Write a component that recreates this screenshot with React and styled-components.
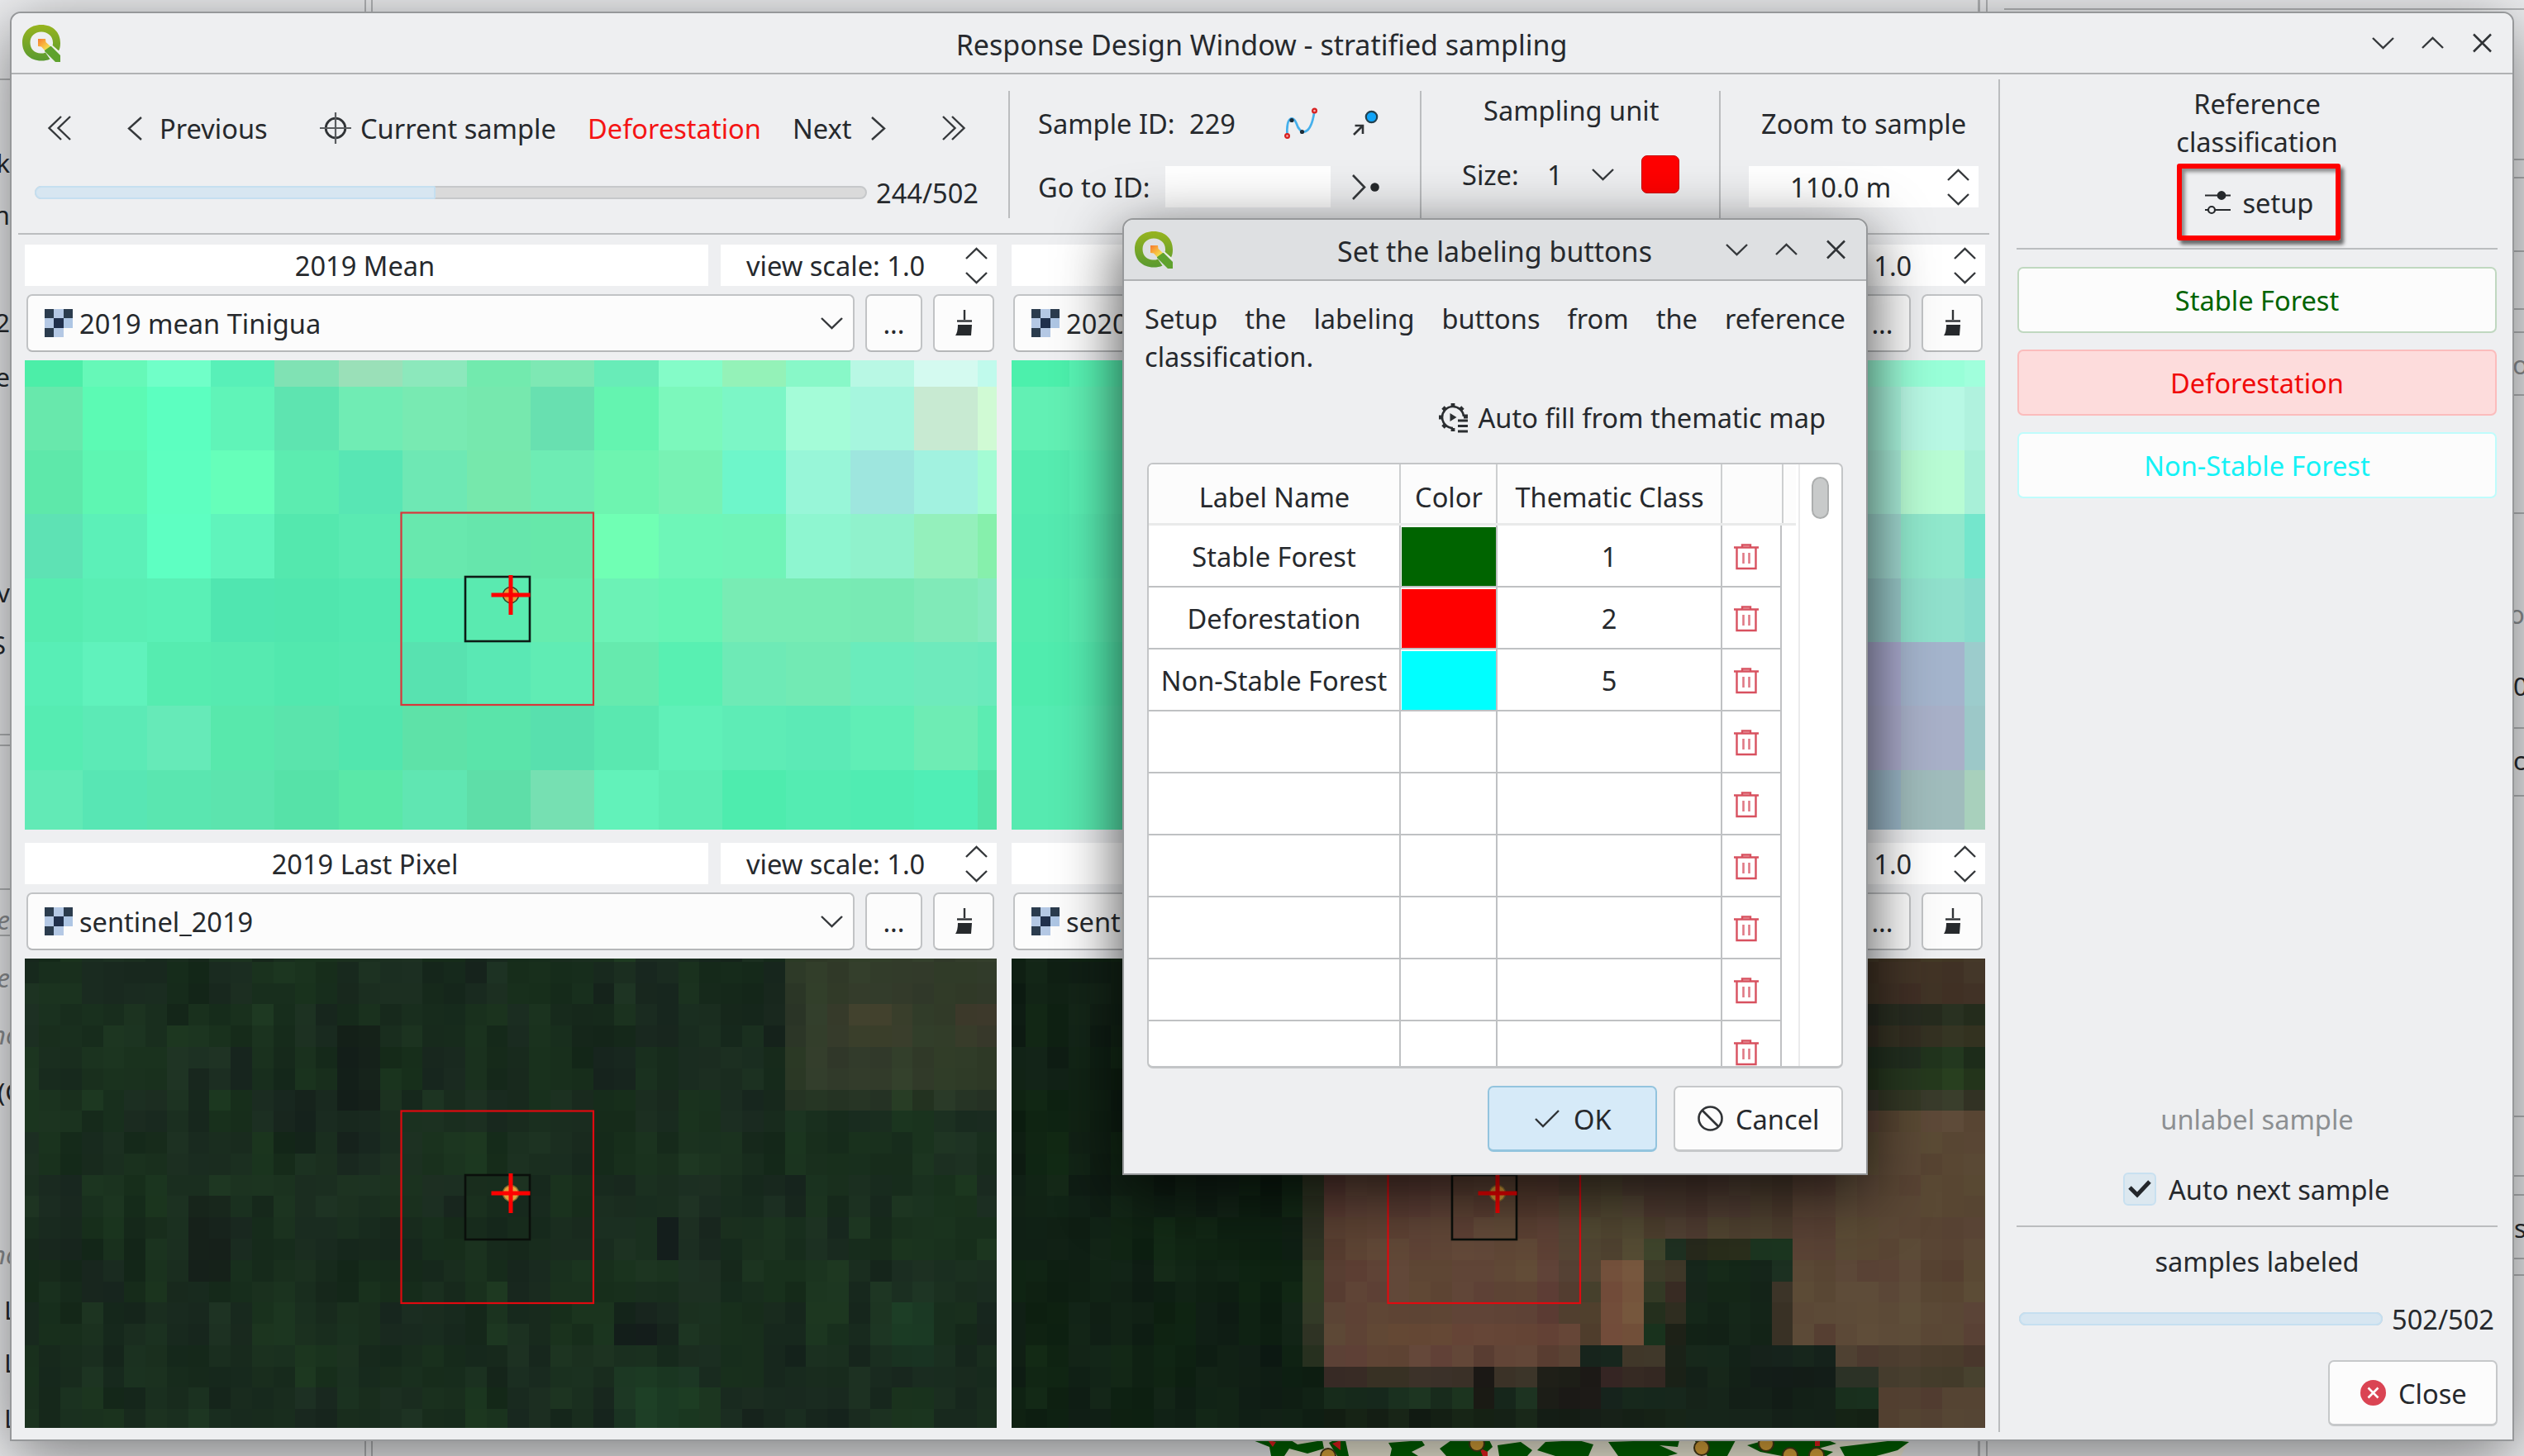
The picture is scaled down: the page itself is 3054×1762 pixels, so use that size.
import React from "react";
import styled, { createGlobalStyle, css } from "styled-components";

const GlobalStyle = createGlobalStyle`
  *, *::before, *::after { box-sizing: border-box; }
  html, body { margin: 0; padding: 0; }
  body {
    font-family: "Noto Sans", "Open Sans", sans-serif;
    font-size: 32.6px;
    line-height: 46px;
    color: #26292d;
    background: #eff0f1;
  }
`;

/* ---------- palette ---------- */
const ink = "#26292d";
const line = "#bbbdbf";
const face = "#eeeff1";

/* ---------- desktop and the window behind ---------- */
const Desktop = styled.div`
  position: relative;
  width: 3054px;
  height: 1762px;
  overflow: hidden;
  background: ${face};
`;

const BackRule = styled.div`
  position: absolute;
  left: ${(p) => p.$x}px;
  top: ${(p) => p.$y}px;
  width: ${(p) => p.$w}px;
  height: ${(p) => p.$h}px;
  background: ${(p) => p.$color || "#b4b6b8"};
`;

const BackText = styled.span`
  position: absolute;
  top: ${(p) => p.$y - 23}px;
  ${(p) => (p.$x === undefined ? "right: 3042px;" : `left: ${p.$x}px;`)}
  font-size: 31px;
  color: ${(p) => (p.$dim ? "#8d9093" : ink)};
  font-style: ${(p) => (p.$italic ? "italic" : "normal")};
  white-space: nowrap;
`;

const BackMap = styled.svg`
  position: absolute;
  left: 1510px;
  top: 1743px;
  display: block;
`;

/* ---------- window frames ---------- */
const Frame = styled.div`
  position: absolute;
  display: flex;
  flex-direction: column;
  background: ${face};
  border: 2px solid #96989a;
  border-radius: 13px 13px 0 0;
`;

const MainWindow = styled(Frame)`
  left: 12px;
  top: 14px;
  width: 3030px;
  height: 1730px;
  box-shadow: 0 18px 80px rgba(0, 0, 0, 0.5);
`;

const Dialog = styled(Frame)`
  left: 1358px;
  top: 264px;
  width: 902px;
  height: 1158px;
  box-shadow: 0 20px 76px rgba(0, 0, 0, 0.72);
`;

const TitleBar = styled.header`
  display: grid;
  grid-template-columns: 200px 1fr 200px;
  align-items: center;
  flex: none;
  height: 74px;
  padding: ${(p) => (p.$dialog ? "0 20px 0 12px" : "0 20px 0 12px")};
  background: ${(p) => (p.$dialog ? "#dee0e2" : face)};
  border-bottom: 2px solid #b0b2b4;
  border-radius: 12px 12px 0 0;
`;

const TitleText = styled.h1`
  margin: 0;
  padding: 3px 0 0 7px;
  font-size: 34px;
  font-weight: 400;
  text-align: center;
  white-space: nowrap;
`;

const TitleControls = styled.div`
  display: flex;
  justify-content: flex-end;
  gap: 33px;
  padding-right: 3px;
  margin-top: ${(p) => (p.$lift ? -1 : 0)}px;
`;

const ControlSlot = styled.div`
  display: flex;
  align-items: center;
  width: 27px;
  height: 26px;
`;

const Body = styled.div`
  display: flex;
  flex: 1;
  min-height: 0;
`;

/* ---------- generic text ---------- */
const Text = styled.span`
  display: block;
  flex: none;
  width: ${(p) => (p.$w ? `${p.$w}px` : "auto")};
  margin-left: ${(p) => p.$ml || 0}px;
  padding-top: 2px;
  color: ${(p) => p.$color || "inherit"};
  white-space: nowrap;
`;

const Icon = styled.svg`
  display: block;
  flex: none;
  overflow: visible;
  margin-left: ${(p) => p.$ml || 0}px;
`;

/* ---------- toolbar ---------- */
const LeftColumn = styled.div`
  display: flex;
  flex-direction: column;
  width: 2404px;
  padding: 0 11px 0 8px;
`;

const Toolbar = styled.div`
  display: flex;
  flex: none;
  height: 194px;
  border-bottom: 2px solid ${line};
`;

const ToolSection = styled.section`
  display: flex;
  flex-direction: column;
  flex: none;
  width: ${(p) => p.$w}px;
  padding-top: ${(p) => p.$pt}px;
  padding-left: ${(p) => p.$pl || 0}px;
  gap: ${(p) => p.$gap}px;
`;

const ToolRow = styled.div`
  display: flex;
  align-items: center;
  flex: none;
  height: ${(p) => p.$h || 46}px;
  padding-left: ${(p) => p.$pl || 0}px;
`;

const ToolSeparator = styled.div`
  flex: none;
  width: 2px;
  height: 154px;
  margin-top: 20px;
  background: ${line};
`;

const ProgressTrack = styled.div`
  flex: none;
  width: ${(p) => p.$w}px;
  height: 16px;
  border: 2px solid #c6c8ca;
  border-radius: 8px;
  background: #dadada;
`;

const ProgressFill = styled.div`
  height: 16px;
  margin: -2px 0 0 -2px;
  border: 2px solid #c5dff0;
  border-radius: ${(p) => (p.$full ? "8px" : "8px 2px 2px 8px")};
  background: #d7e6f1;
`;

const IdInput = styled.div`
  flex: none;
  width: 200px;
  height: 50px;
  background: #fff;
`;

const ColorSwatch = styled.div`
  flex: none;
  width: 46px;
  height: 46px;
  margin-left: 33px;
  border: 1px solid #c80000;
  border-radius: 7px;
  background: #ff0000;
`;

const SpinBox = styled.div`
  display: flex;
  align-items: center;
  justify-content: space-between;
  flex: ${(p) => (p.$w ? "none" : 1)};
  width: ${(p) => (p.$w ? `${p.$w}px` : "auto")};
  height: 50px;
  padding: 0 11px 0 ${(p) => p.$pl}px;
  background: #fff;
`;

const SpinArrows = styled.div`
  display: flex;
  flex-direction: column;
  gap: 15px;
`;

/* ---------- view panels ---------- */
const Views = styled.div`
  display: grid;
  grid-template-columns: 1176px 1178px;
  gap: 16px 18px;
  padding: 12px 5px 0 8px;
`;

const View = styled.section`
  display: flex;
  flex-direction: column;
  gap: 10px;
  height: 708px;
`;

const ViewHeader = styled.div`
  display: flex;
  gap: 15px;
  height: 50px;
`;

const ViewTitle = styled.div`
  width: 827px;
  padding-right: 4px;
  background: #fff;
  line-height: 52px;
  text-align: center;
`;

const LayerRow = styled.div`
  display: flex;
  height: 70px;
  padding: 0 3px 0 2px;
  gap: 13px;
`;

const raised = css`
  border: 2px solid #c1c3c5;
  border-bottom-color: #b5b7b9;
  border-radius: 7px;
  background: #fcfcfc;
`;

const LayerSelect = styled.div`
  ${raised}
  display: flex;
  align-items: center;
  flex: 1;
  padding: 0 12px 0 20px;
`;

const LayerName = styled.span`
  flex: 1;
  padding: 2px 0 0 8px;
  white-space: nowrap;
`;

const ToolButton = styled.div`
  ${raised}
  display: flex;
  align-items: center;
  justify-content: center;
  width: ${(p) => p.$w}px;
`;

const Canvas = styled.svg`
  display: block;
  flex: none;
  overflow: hidden;
`;

/* ---------- classification panel ---------- */
const SidePanel = styled.aside`
  display: flex;
  flex-direction: column;
  flex: 1;
  padding: 13px 18px 16px 22px;
  position: relative;
  &::before {
    content: "";
    position: absolute;
    left: 0;
    top: 6px;
    bottom: 9px;
    width: 2px;
    background: ${line};
  }
`;

const SideHeading = styled.div`
  text-align: center;
`;

const SetupButton = styled.div`
  display: flex;
  align-items: center;
  align-self: center;
  width: 198px;
  height: 93px;
  margin: 3px 0 0 3px;
  padding-left: 28px;
  border: 6px solid #fe0000;
  border-radius: 3px;
  box-shadow: 4px 5px 4px rgba(60, 60, 60, 0.75), inset 4px 4px 4px rgba(60, 60, 60, 0.55);
`;

const Rule = styled.div`
  flex: none;
  height: 2px;
  margin-top: ${(p) => p.$mt}px;
  background: ${line};
`;

const ClassList = styled.div`
  display: flex;
  flex-direction: column;
  gap: 20px;
  margin: 21px 1px 0 1px;
`;

const classTone = {
  forest: css`
    color: #006400;
    border-color: #c0d8c0;
    background: #fcfcfc;
  `,
  cleared: css`
    color: #f00a0a;
    border-color: #fbbcbc;
    background: #fddcdc;
  `,
  unstable: css`
    color: #14f2f6;
    border-color: #bffcfc;
    background: #fcfcfc;
  `,
};

const ClassButton = styled.div`
  display: flex;
  align-items: center;
  justify-content: center;
  height: 80px;
  padding-top: 2px;
  border: 2px solid;
  border-radius: 7px;
  ${(p) => classTone[p.$tone]}
`;

const Spacer = styled.div`
  flex: 1;
`;

const CenterLine = styled.div`
  text-align: center;
  margin-top: ${(p) => p.$mt || 0}px;
  color: ${(p) => (p.$dim ? "#8c8f92" : ink)};
`;

const CheckRow = styled.div`
  display: flex;
  align-items: center;
  height: 40px;
  margin-top: 41px;
  padding-left: 129px;
`;

const CheckBox = styled.div`
  display: flex;
  align-items: center;
  justify-content: center;
  width: 40px;
  height: 40px;
  border: 2px solid #c8e0f0;
  border-radius: 6px;
  background: #dce8f0;
`;

const ProgressRow = styled.div`
  display: flex;
  align-items: center;
  height: 46px;
  margin-top: 23px;
  padding-left: 3px;
`;

const PushButton = styled.div`
  display: flex;
  align-items: center;
  flex: none;
  width: 205px;
  height: 80px;
  padding-left: ${(p) => p.$pl}px;
  border: 2px solid ${(p) => (p.$primary ? "#93c4de" : "#c6c8ca")};
  border-bottom-width: 3px;
  border-radius: 7px;
  background: ${(p) => (p.$primary ? "#d6eaf8" : "#fcfcfc")};
`;

const CloseRow = styled.div`
  display: flex;
  justify-content: flex-end;
  margin-top: 27px;
`;

/* ---------- dialog content ---------- */
const DialogBody = styled.div`
  display: flex;
  flex-direction: column;
  padding: 23px 25px 0 25px;
`;

const Intro = styled.p`
  margin: 0;
  text-align: justify;
`;

const AutoFill = styled.div`
  display: flex;
  align-items: center;
  justify-content: flex-end;
  height: 46px;
  margin-top: 27px;
  padding-right: 24px;
  gap: 13px;
`;

const TableFrame = styled.div`
  display: flex;
  width: 842px;
  height: 733px;
  margin: 32px 0 0 3px;
  border: 2px solid #c3c5c7;
  border-bottom-width: 3px;
  border-radius: 7px;
  background: #fff;
  overflow: hidden;
`;

const TableArea = styled.div`
  width: 788px;
  border-right: 2px solid #ebebec;
`;

const columns = "305px 117px 272px";

const HeaderRow = styled.div`
  display: grid;
  grid-template-columns: ${columns} 74px;
  width: 783px;
  height: 74px;
  border-bottom: 3px solid #e9eaea;
  background: #fcfcfc;
`;

const HeaderCell = styled.div`
  display: flex;
  align-items: center;
  justify-content: center;
  padding: 8px 0 0 1px;
  border-right: 2px solid #cdcfd0;
  white-space: nowrap;
`;

const Row = styled.div`
  display: grid;
  grid-template-columns: ${columns} 72px;
  width: 766px;
  height: 75px;
`;

const Cell = styled.div`
  display: flex;
  align-items: center;
  justify-content: ${(p) => (p.$icon ? "flex-start" : "center")};
  padding-top: 3px;
  padding-left: ${(p) => (p.$icon ? 14 : 0)}px;
  border-right: 2px solid #bfc1c3;
  border-bottom: 2px solid #bfc1c3;
  white-space: nowrap;
`;

const ColorCell = styled(Cell)`
  ${(p) =>
    p.$color &&
    css`
      padding: 2px 0 0 1px;
      &::before {
        content: "";
        align-self: stretch;
        flex: 1;
        background: ${p.$color};
      }
    `}
`;

const ScrollArea = styled.div`
  flex: 1;
  padding: 15px 0 0 14px;
`;

const ScrollHandle = styled.div`
  width: 21px;
  height: 51px;
  border: 2px solid #acaeae;
  border-radius: 11px;
  background: #c8caca;
`;

const DialogButtons = styled.div`
  display: flex;
  justify-content: flex-end;
  gap: 20px;
  margin-top: 21px;
  padding-right: 3px;
`;

/* ---------- icons ---------- */
const Chevron = ({ dir = "down", w = 27, h = 14, ml, sw = 2.4, color = "#35383b" }) => {
  const d = {
    down: `M1 1 L${w / 2} ${h - 1} L${w - 1} 1`,
    up: `M1 ${h - 1} L${w / 2} 1 L${w - 1} ${h - 1}`,
    left: `M${w - 1} 1 L1 ${h / 2} L${w - 1} ${h - 1}`,
    right: `M1 1 L${w - 1} ${h / 2} L1 ${h - 1}`,
  }[dir];
  return (
    <Icon $ml={ml} width={w} height={h} viewBox={`0 0 ${w} ${h}`} fill="none" stroke={color} strokeWidth={sw}>
      <path d={d} />
    </Icon>
  );
};

const DoubleChevron = ({ flip, ml }) => (
  <Icon $ml={ml} width="28" height="30" viewBox="0 0 28 30" fill="none" stroke="#35383b" strokeWidth="2.4">
    <g transform={flip ? "translate(28 0) scale(-1 1)" : undefined}>
      <path d="M16 1 L1.5 15 L16 29" />
      <path d="M27 1 L12.5 15 L27 29" />
    </g>
  </Icon>
);

const CrossIcon = () => (
  <Icon width="27" height="24" viewBox="0 0 27 24" stroke="#303336" strokeWidth="2.5">
    <path d="M3 1.5 L24 22.5 M24 1.5 L3 22.5" />
  </Icon>
);

const QgisLogo = ({ id }) => (
  <Icon width="48" height="46" viewBox="0 0 48 46">
    <defs>
      <linearGradient id={id} x1="0" y1="0" x2="0" y2="1">
        <stop offset="0" stopColor="#97b41f" />
        <stop offset="1" stopColor="#5a9a30" />
      </linearGradient>
      <linearGradient id={`${id}t`} x1="0" y1="0" x2="1" y2="1">
        <stop offset="0" stopColor="#f47a30" />
        <stop offset="0.45" stopColor="#f9b23c" />
        <stop offset="0.8" stopColor="#f0e050" />
        <stop offset="1" stopColor="#c8dc70" />
      </linearGradient>
    </defs>
    <path
      fill={`url(#${id})`}
      fillRule="evenodd"
      d="M24 1 C38 1 47 10 47 23 C47 27 46.500 30 45 32.500 L37.500 26 C38 25 38 24 38 22.500 C38 15 32 9.500 24 9.500 C16 9.500 10.500 15 10.500 22.500 C10.500 30.500 16 35.500 23 35.500 C25.500 35.500 27.500 35.500 29 34.500 L34.500 42.500 C31.500 44 28 44.500 24 44.500 C10 44.500 1 35 1 22.500 C1 10 10 1 24 1 Z"
    />
    <path fill="#5fa22e" d="M28 27 L36 27 L47 38 L47 46 L41 46 L28 33 Z" />
    <path fill={`url(#${id}t)`} d="M20 18 L29 18 L29.500 22 L35 27 L28 32 L24 27.500 L20 27 Z" />
    <path stroke="#eef2e4" strokeWidth="1.600" d="M36.500 26 L47 35.500" fill="none" />
  </Icon>
);

const TargetIcon = () => (
  <Icon $ml={60} width="38" height="38" viewBox="0 0 38 38" fill="none" stroke="#303336">
    <circle cx="19" cy="19" r="11.800" strokeWidth="2.800" />
    <path d="M19 0 V38 M0 19 H38" strokeWidth="2.200" stroke="#5a5d60" />
  </Icon>
);

const CurveIcon = () => (
  <Icon $ml={59} width="40" height="38" viewBox="0 0 40 38" fill="none">
    <path d="M3.500 34 C2 10 11 10 14.500 19 C19 34 32 36 36.500 4" stroke="#45b0ec" strokeWidth="2.700" />
    <circle cx="3.500" cy="34.500" r="2.400" fill="#f2b8b8" stroke="#d82020" strokeWidth="2.200" />
    <circle cx="36.500" cy="4" r="2.400" fill="#f2b8b8" stroke="#d82020" strokeWidth="2.200" />
    <circle cx="9" cy="15.500" r="2.600" fill="#1d2c38" />
    <circle cx="21.500" cy="29.500" r="2.600" fill="#1d2c38" />
  </Icon>
);

const MovePointIcon = () => (
  <Icon $ml={43} width="32" height="32" viewBox="0 0 32 32" fill="none">
    <circle cx="22.500" cy="8.500" r="6.700" fill="#0fa4f8" stroke="#22404e" strokeWidth="2.200" />
    <path d="M1 30 L11.500 19.500 M2.500 19 H12 V29" stroke="#303336" strokeWidth="2.600" />
  </Icon>
);

const GoToIcon = () => (
  <Icon $ml={26} width="33" height="31" viewBox="0 0 33 31" fill="none">
    <path d="M1 1 L15 15.500 L1 30" stroke="#35383b" strokeWidth="2.600" />
    <circle cx="27.500" cy="15.500" r="5.300" fill="#26292c" />
  </Icon>
);

const RasterIcon = () => {
  const cells = [
    ["#2b3c4e", "#b4c8e4", "#2b3c4e"],
    ["#b4c8e4", "#20304c", "#aec6e4"],
    ["#2b3c4e", "#b4c8e4", null],
  ];
  return (
    <Icon width="34" height="34" viewBox="0 0 33 33" shapeRendering="crispEdges">
      {cells.map((r, y) => r.map((c, x) => c && <rect key={`${x}${y}`} x={x * 11} y={y * 11} width="11" height="11" fill={c} />))}
    </Icon>
  );
};

const BrushIcon = () => (
  <Icon width="22" height="34" viewBox="0 0 22 34">
    <path d="M12 1 V13" stroke="#303336" strokeWidth="2.400" />
    <path d="M3 14.500 H21" stroke="#303336" strokeWidth="2.400" />
    <path d="M4 19 H21 L20 32 H1 Q4 28 4 19 Z" fill="#26292c" />
  </Icon>
);

const SetupIcon = () => (
  <Icon width="31" height="30" viewBox="0 0 31 30" fill="none" stroke="#26292c" strokeWidth="2.200">
    <path d="M0 6.500 H31 M12 24 H31 M0 24 H4" />
    <circle cx="20" cy="6.500" r="4.300" fill="#26292c" />
    <circle cx="8" cy="24" r="4" />
  </Icon>
);

const GearIcon = () => (
  <Icon width="36" height="36" viewBox="0 0 36 36" fill="none" stroke="#2b2e31">
    <path d="M31 17 A13 13 0 1 0 18 31" strokeWidth="2.600" />
    <path d="M18 1 V5 M6 6 L9 9 M1 18 H5 M6 30 L9 27 M30 6 L27 9 M18 31 V35 M31 17 H36" strokeWidth="4.800" />
    <path d="M14.500 13 L22.500 18 L14.500 23 Z" fill="#2b2e31" stroke="none" />
    <path d="M22 20 H36 V36 H22 Z" fill={face} stroke="none" />
    <path d="M24 22 H36 M24 28.500 H36 M24 35 H36" strokeWidth="2.800" />
  </Icon>
);

const TrashIcon = () => (
  <Icon width="30" height="32" viewBox="0 0 30 32" fill="none" stroke="#d8515f" strokeWidth="2.400">
    <path d="M0 4.500 H30 M10 4 V1.500 H20 V4" />
    <path d="M3.500 5 V30 H26.500 V5" />
    <path d="M11.500 11 V24 M18.500 11 V24" strokeWidth="2.600" stroke="#e07a86" />
  </Icon>
);

const OkIcon = () => (
  <Icon width="30" height="22" viewBox="0 0 30 22" fill="none" stroke="#303336" strokeWidth="2.400">
    <path d="M1 11 L10 20 L29 1" />
  </Icon>
);

const CancelIcon = () => (
  <Icon width="31" height="31" viewBox="0 0 31 31" fill="none" stroke="#303336" strokeWidth="2.600">
    <circle cx="15.500" cy="15.500" r="14" />
    <path d="M5.500 5.500 L25.500 25.500" />
  </Icon>
);

const CloseIcon = () => (
  <Icon width="31" height="31" viewBox="0 0 31 31">
    <circle cx="15.500" cy="15.500" r="15.500" fill="#da4453" />
    <path d="M9.500 9.500 L21.500 21.500 M21.500 9.500 L9.500 21.500" stroke="#fff" strokeWidth="2.600" />
  </Icon>
);

const CheckIcon = () => (
  <Icon width="28" height="22" viewBox="0 0 28 22" fill="none" stroke="#24272b" strokeWidth="5">
    <path d="M2 9 L11 18 L26 2" />
  </Icon>
);

/* ---------- raster maps ---------- */
const CELL = 77.35;

const meanWest = `
4ceea8 66f8b8 70ffc8 58f0b8 80e2b4 9ae0b8 8ce8bc 72eaae 7ee8b4 68ecb8 84fcc8 94f2b8 88f8c8 b8f8e4 d4faf0 c0faec
68e8ac 5cfab4 5cffc0 60f4b8 5ee4b0 70ecb4 78eab2 76e8ae 68e0b0 64f4b0 7cf8bc 7cf6c6 a4fcd8 a6f6de c8ead2 d0fad4
5ee8aa 5ef6b2 5effc0 66ffba 5cecb0 58e6b4 6ee8b4 76e8ac 6eecb4 6ef4b0 78f2b4 6ef6ca 98f6d8 9ee6de a2f2e0 a4fcd4
5ee2b4 5cf0b8 5effc2 60f4bc 54e8ae 5aeab2 68e8ae 66e6ac 66e8aa 70ffb4 6ef6b8 70f4b8 8ef6d0 90f2cc 94f0bc 86f0ac
56ecb0 5aeeb4 5af0b6 50e6b0 50e6ae 52e8b0 54ecb2 5aeab0 66ecae 6cf2b6 66f4b4 78ecb4 78ecb4 78eab4 80eab8 86eac0
58eeb6 60f2bc 56ecb0 56eab0 52e8ae 54e8b0 58e2b0 5ae8b4 60ecb4 66eaae 58f0b2 6eeab6 72eab4 6aecbc 6eeabc 6aeabc
56ecb2 5ceab6 66eab8 58e8ac 5ae4ac 52e6ae 5ee2a8 5ae4aa 58e0ae 5ae8b0 60f0b8 5eecb6 5ceab6 60eeb6 6eecb4 5cecb2
62eab6 58e6b4 5ae6b0 5ce4ae 56e2a8 5ae8a8 60e6b2 5edea8 76e0b2 62f2ba 5eecb4 4eecae 54ecb2 50ecb2 50eeb6 54e4a8
`;

const eastEdge = [
  ["4cf0ac", "58f4b4", "9cfcd8", "98ffd8", "a0ffdc"],
  ["62f0b4", "60f0b4", "a8f4dc", "b8f8e4", "b0f2de"],
  ["56ecb0", "5af0b4", "a8ecd8", "b8fcd4", "a8f0d8"],
  ["54eab0", "58ecb2", "a0d8d0", "90e8cc", "74e6cc"],
  ["54ecae", "5aeeb2", "98c8c8", "90e0cc", "88dccc"],
  ["50ecae", "54ecb0", "a8a8cc", "a4b4cc", "9ccccc"],
  ["54ecb2", "58ecb2", "a8a8c8", "a8b0c8", "9cc8c8"],
  ["56eab0", "58eab0", "98b4c4", "a0bcbc", "a8d0bc"],
];

const parseGrid = (s) =>
  s
    .trim()
    .split("\n")
    .map((r) => r.trim().split(" "));

const meanEast = eastEdge.map(([a, b, c, d, e]) => [a, ...Array(12).fill(b), c, d, e]);

const MeanCells = ({ grid }) =>
  grid.map((row, r) =>
    row.map((c, k) => {
      const x = k === 0 ? 0 : 70.4 + (k - 1) * CELL;
      const y = r === 0 ? 0 : 31.6 + (r - 1) * CELL;
      return <rect key={`${r}-${k}`} x={x} y={y} width={CELL + 1} height={CELL + 1} fill={`#${c}`} />;
    })
  );

const hash = (x, y) => {
  const n = Math.sin(x * 127.1 + y * 311.7) * 43758.5453;
  return n - Math.floor(n);
};

const FINE = CELL / 3;

const forestBase = { c: [25, 45, 30], n: 11 };

/* [x0, y0, x1, y1, colour, noise, feather] in canvas pixels */
const westPatches = [
  [905, -60, 1240, 190, [49, 60, 41], 7, 34],
  [975, 40, 1075, 110, [70, 66, 47], 5, 34],
  [1110, 40, 1200, 110, [62, 58, 43], 5, 30],
  [700, 480, 830, 620, [29, 62, 37], 6, 40],
  [1030, 400, 1115, 500, [27, 62, 36], 6, 34],
  [705, 420, 775, 480, [20, 30, 27], 4, 16],
  [765, 310, 800, 376, [20, 29, 28], 3, 12],
  [190, 290, 250, 400, [22, 34, 26], 4, 12],
  [600, 40, 650, 200, [26, 52, 30], 5, 16],
  [380, 80, 430, 180, [20, 32, 25], 4, 12],
];

const eastPatches = [
  [-60, -60, 376, 620, [16, 34, 20], 9, 1],
  [352, 200, 378, 490, [48, 54, 36], 6, 12],
  [376, 180, 1000, 345, [78, 60, 48], 9, 18],
  [376, 240, 690, 500, [94, 66, 53], 11, 16],
  [660, 260, 790, 410, [82, 68, 51], 9, 20],
  [650, 390, 745, 480, [82, 66, 47], 11, 20],
  [440, 430, 700, 486, [100, 68, 53], 10, 16],
  [376, 484, 790, 532, [56, 46, 37], 10, 12],
  [376, 532, 1060, 620, [22, 34, 22], 9, 12],
  [710, 360, 772, 480, [116, 80, 60], 9, 14],
  [728, 460, 790, 486, [104, 72, 56], 7, 10],
  [560, 480, 592, 545, [28, 27, 22], 8, 8],
  [640, 480, 712, 545, [28, 28, 22], 8, 10],
  [772, 350, 830, 440, [58, 50, 36], 8, 14],
  [790, 440, 830, 520, [30, 34, 24], 6, 10],
  [817, 335, 905, 390, [40, 40, 27], 7, 14],
  [817, 355, 920, 480, [20, 36, 24], 6, 10],
  [800, 476, 1000, 620, [20, 33, 24], 7, 10],
  [920, 380, 980, 480, [58, 50, 38], 7, 12],
  [940, 165, 1240, 475, [90, 70, 53], 10, 14],
  [998, 470, 1240, 510, [76, 62, 46], 9, 10],
  [1046, 500, 1240, 620, [82, 66, 48], 9, 10],
  [1000, -60, 1240, 70, [66, 54, 38], 7, 10],
  [1000, 64, 1240, 122, [52, 50, 34], 7, 10],
  [1000, 116, 1240, 168, [38, 56, 30], 7, 10],
];

const clamp01 = (v) => Math.max(0, Math.min(1, v));

const FineCells = ({ patches, seed }) => {
  const out = [];
  for (let r = -1; r < 23; r++) {
    for (let k = -1; k < 46; k++) {
      const x = 17.2 + k * FINE;
      const y = 3.8 + r * FINE;
      const cx = x + FINE / 2;
      const cy = y + FINE / 2;
      let c = forestBase.c;
      let n = forestBase.n;
      patches.forEach(([x0, y0, x1, y1, pc, pn, feather]) => {
        const inside = Math.min(cx - x0, x1 - cx, cy - y0, y1 - cy);
        const a = clamp01(inside / feather);
        if (a > 0) {
          c = c.map((q, i) => q + (pc[i] - q) * a);
          n += (pn - n) * a;
        }
      });
      const wide = hash(Math.floor(k / 3) + seed * 7, Math.floor(r / 3)) - 0.5;
      const broad = hash(k + seed, Math.floor((r + (k % 3)) / 3)) - 0.5;
      const fine = hash(k + seed * 3, r) - 0.5;
      const tint = hash(Math.floor(k / 2) * 3 + seed, Math.floor(r / 2) + 51) - 0.5;
      const v = (broad + fine * 0.5 + wide * 0.5) * n;
      const rgb = [c[0] + v * 0.6 - tint * n * 0.2, c[1] + v * 1.1 + tint * n * 0.5, c[2] + v * 0.5 - tint * n * 0.4].map((q) =>
        Math.max(0, Math.round(q))
      );
      out.push(<rect key={`${r},${k}`} x={x} y={y} width={FINE + 0.6} height={FINE + 0.6} fill={`rgb(${rgb.join(",")})`} />);
    }
  }
  return out;
};

const SampleMarker = ({ dark }) => (
  <g fill="none">
    <rect x="455.500" y="184.500" width="232.500" height="232.500" stroke={dark ? "#e00a10" : "#d8363a"} strokeWidth="2.200" />
    <rect x="533" y="262" width="78" height="78" stroke={dark ? "#0a0f0b" : "#0c1c16"} strokeWidth="2.600" />
    <circle cx="588" cy="284" r="9.500" fill="#e2a03a" stroke={dark ? "#8a7030" : "#33402a"} strokeWidth="1.500" />
    <path d="M588 260 V308 M564.500 284 H611.500" stroke="#ff0000" strokeWidth="5" />
  </g>
);

const MapCanvas = ({ width, children, dark }) => (
  <Canvas width={width} height="568" viewBox={`0 0 ${width} 568`}>
    <g shapeRendering="crispEdges">{children}</g>
    <SampleMarker dark={dark} />
  </Canvas>
);

/* ---------- composed parts ---------- */
const Spinner = () => (
  <SpinArrows>
    <Chevron dir="up" />
    <Chevron dir="down" />
  </SpinArrows>
);

const WindowControls = ({ lift }) => (
  <TitleControls $lift={lift}>
    <ControlSlot>
      <Chevron />
    </ControlSlot>
    <ControlSlot>
      <Chevron dir="up" />
    </ControlSlot>
    <ControlSlot>
      <CrossIcon />
    </ControlSlot>
  </TitleControls>
);

const ViewPanel = ({ title, layer, children }) => (
  <View>
    <ViewHeader>
      <ViewTitle>{title}</ViewTitle>
      <SpinBox $pl={31}>
        <Text>view scale: 1.0</Text>
        <Spinner />
      </SpinBox>
    </ViewHeader>
    <LayerRow>
      <LayerSelect>
        <RasterIcon />
        <LayerName>{layer}</LayerName>
        <Chevron />
      </LayerSelect>
      <ToolButton $w={69}>
        <Text>...</Text>
      </ToolButton>
      <ToolButton $w={74}>
        <BrushIcon />
      </ToolButton>
    </LayerRow>
    {children}
  </View>
);

const backTexts = [
  { y: 197, t: "k" },
  { y: 260, t: "n" },
  { y: 390, t: "2" },
  { y: 456, t: "e" },
  { y: 717, t: "v" },
  { y: 780, t: "S", x: -10 },
  { y: 1113, t: "e", dim: true, italic: true },
  { y: 1183, t: "e", dim: true, italic: true },
  { y: 1252, t: "no", x: -11, dim: true, italic: true },
  { y: 1321, t: "(C", x: -3 },
  { y: 1518, t: "no", x: -11, dim: true, italic: true },
  { y: 1585, t: "L", x: 5 },
  { y: 1649, t: "L", x: 5 },
  { y: 1716, t: "L", x: 5 },
  { y: 441, t: "o", x: 3040, dim: true },
  { y: 743, t: "ov", x: 3036, dim: true },
  { y: 830, t: "0", x: 3041 },
  { y: 920, t: "c", x: 3041 },
  { y: 1486, t: "s", x: 3042 },
];

const backLinesRight = [192, 214, 303, 373, 401, 477, 620, 880, 962, 1350, 1422, 1445, 1522, 1542];
const backLinesLeft = [95, 888, 901, 1075, 1131];

const mapBlobs = [
  "M6 0 L52 0 L60 5 L90 0 L92 10 L72 16 L50 10 L44 19 L28 19 L26 8 Z",
  "M98 3 L104 0 L118 0 L122 19 L108 19 Z",
  "M170 3 L210 0 L214 6 L198 14 L206 19 L172 19 L174 10 Z",
  "M246 0 L292 0 L296 8 L284 19 L240 19 L232 10 Z",
  "M302 6 L330 2 L344 12 L338 19 L304 19 Z",
  "M360 2 L400 0 L418 5 L412 19 L372 19 L350 12 Z",
  "M436 2 L496 0 L522 0 L520 8 L498 6 L520 16 L508 19 L448 19 Z",
  "M540 0 L590 0 L580 19 L556 19 Z",
  "M604 6 L626 0 L702 0 L712 4 L690 10 L708 14 L700 19 L646 19 L620 14 Z",
  "M716 8 L782 0 L800 2 L786 12 L760 19 L722 19 Z",
];

const BackDecor = () => (
  <>
    <BackRule $x={441} $y={0} $w={2} $h={1762} />
    <BackRule $x={449} $y={0} $w={2} $h={1762} />
    <BackRule $x={2393} $y={0} $w={3} $h={1762} />
    <BackRule $x={2403} $y={0} $w={2} $h={1762} />
    <BackRule $x={2425} $y={10} $w={629} $h={2} />
    {backLinesLeft.map((y) => (
      <BackRule key={y} $x={0} $y={y} $w={12} $h={2} />
    ))}
    {backLinesRight.map((y) => (
      <BackRule key={y} $x={3042} $y={y} $w={12} $h={2} />
    ))}
    {backTexts.map((b) => (
      <BackText key={b.y} $y={b.y} $x={b.x} $dim={b.dim} $italic={b.italic}>
        {b.t}
      </BackText>
    ))}
    <BackMap width="820" height="19" viewBox="0 0 820 19">
      <path d="M20 0 H800 L790 19 H30 Z" fill="#f4f0dc" />
      {mapBlobs.map((d) => (
        <path key={d} d={d} fill="#006400" />
      ))}
      <path d="M102 4 L112 0 V12 Z M280 9 L290 14 V19 H284 Z M686 0 H692 V7 H686 Z M24 0 L34 2 L30 8 Z" fill="#f02020" />
      {[
        [97, 19],
        [277, 4],
        [549, 9],
        [627, 4],
        [656, 18],
        [688, 18],
      ].map(([x, y]) => (
        <circle key={x} cx={x} cy={y} r="9" fill="#e0a83c" stroke="#4a3c18" strokeWidth="2" />
      ))}
    </BackMap>
  </>
);

const labelRows = [
  { name: "Stable Forest", color: "#006400", value: "1" },
  { name: "Deforestation", color: "#ff0000", value: "2" },
  { name: "Non-Stable Forest", color: "#00ffff", value: "5" },
  {},
  {},
  {},
  {},
  {},
  {},
];

const progress = { done: 244, total: 502 };

const LabelDialog = () => (
  <Dialog>
    <TitleBar $dialog>
      <QgisLogo id="logoB" />
      <TitleText>Set the labeling buttons</TitleText>
      <WindowControls lift />
    </TitleBar>
    <DialogBody>
      <Intro>Setup the labeling buttons from the reference classification.</Intro>
      <AutoFill>
        <GearIcon />
        <Text>Auto fill from thematic map</Text>
      </AutoFill>
      <TableFrame>
        <TableArea>
          <HeaderRow>
            <HeaderCell>Label Name</HeaderCell>
            <HeaderCell>Color</HeaderCell>
            <HeaderCell>Thematic Class</HeaderCell>
            <HeaderCell />
          </HeaderRow>
          {labelRows.map((r, i) => (
            <Row key={i}>
              <Cell>{r.name}</Cell>
              <ColorCell $color={r.color} />
              <Cell>{r.value}</Cell>
              <Cell $icon>
                <TrashIcon />
              </Cell>
            </Row>
          ))}
        </TableArea>
        <ScrollArea>
          <ScrollHandle />
        </ScrollArea>
      </TableFrame>
      <DialogButtons>
        <PushButton $primary $pl={55}>
          <OkIcon />
          <Text $ml={17}>OK</Text>
        </PushButton>
        <PushButton $pl={27}>
          <CancelIcon />
          <Text $ml={15}>Cancel</Text>
        </PushButton>
      </DialogButtons>
    </DialogBody>
  </Dialog>
);

export default function App() {
  return (
    <>
      <GlobalStyle />
      <Desktop>
        <BackDecor />
        <MainWindow>
          <TitleBar>
            <QgisLogo id="logoA" />
            <TitleText>Response Design Window - stratified sampling</TitleText>
            <WindowControls />
          </TitleBar>
          <Body>
            <LeftColumn>
              <Toolbar>
                <ToolSection $w={1198} $pt={42} $gap={32}>
                  <ToolRow $pl={36}>
                    <DoubleChevron />
                    <Chevron dir="left" w={17} h={29} ml={69} />
                    <Text $w={134} $ml={21}>
                      Previous
                    </Text>
                    <TargetIcon />
                    <Text $w={240} $ml={11}>
                      Current sample
                    </Text>
                    <Text $w={212} $ml={35} $color="#f51414">
                      Deforestation
                    </Text>
                    <Text $w={74} $ml={36}>
                      Next
                    </Text>
                    <Chevron dir="right" w={17} h={29} ml={21} />
                    <DoubleChevron flip ml={69} />
                  </ToolRow>
                  <ToolRow $pl={20}>
                    <ProgressTrack $w={1007}>
                      <ProgressFill style={{ width: `${((progress.done / progress.total) * 1003 - 3).toFixed(0)}px` }} />
                    </ProgressTrack>
                    <Text $ml={11}>
                      {progress.done}/{progress.total}
                    </Text>
                  </ToolRow>
                </ToolSection>
                <ToolSeparator />
                <ToolSection $w={496} $pl={34} $pt={36} $gap={29}>
                  <ToolRow>
                    <Text $w={183}>Sample ID:</Text>
                    <Text $w={56}>229</Text>
                    <CurveIcon />
                    <MovePointIcon />
                  </ToolRow>
                  <ToolRow $h={50}>
                    <Text $w={154}>Go to ID:</Text>
                    <IdInput />
                    <GoToIcon />
                  </ToolRow>
                </ToolSection>
                <ToolSeparator />
                <ToolSection $w={360} $pl={49} $pt={20} $gap={32}>
                  <ToolRow $pl={26}>
                    <Text>Sampling unit</Text>
                  </ToolRow>
                  <ToolRow>
                    <Text $w={103}>Size:</Text>
                    <Text $w={54}>1</Text>
                    <Chevron />
                    <ColorSwatch />
                  </ToolRow>
                </ToolSection>
                <ToolSeparator />
                <ToolSection $w={325} $pl={34} $pt={36} $gap={29}>
                  <ToolRow $pl={15}>
                    <Text>Zoom to sample</Text>
                  </ToolRow>
                  <SpinBox $w={278} $pl={50}>
                    <Text>110.0 m</Text>
                    <Spinner />
                  </SpinBox>
                </ToolSection>
              </Toolbar>
              <Views>
                <ViewPanel title="2019 Mean" layer="2019 mean Tinigua">
                  <MapCanvas width={1176}>
                    <MeanCells grid={parseGrid(meanWest)} />
                  </MapCanvas>
                </ViewPanel>
                <ViewPanel title="" layer="2020">
                  <MapCanvas width={1178}>
                    <MeanCells grid={meanEast} />
                  </MapCanvas>
                </ViewPanel>
                <ViewPanel title="2019 Last Pixel" layer="sentinel_2019">
                  <MapCanvas width={1176} dark>
                    <FineCells patches={westPatches} seed={3} />
                  </MapCanvas>
                </ViewPanel>
                <ViewPanel title="" layer="sentinel">
                  <MapCanvas width={1178} dark>
                    <FineCells patches={eastPatches} seed={11} />
                  </MapCanvas>
                </ViewPanel>
              </Views>
            </LeftColumn>
            <SidePanel>
              <SideHeading>
                Reference
                <br />
                classification
              </SideHeading>
              <SetupButton>
                <SetupIcon />
                <Text $ml={15}>setup</Text>
              </SetupButton>
              <Rule $mt={9} />
              <ClassList>
                <ClassButton $tone="forest">Stable Forest</ClassButton>
                <ClassButton $tone="cleared">Deforestation</ClassButton>
                <ClassButton $tone="unstable">Non-Stable Forest</ClassButton>
              </ClassList>
              <Spacer />
              <CenterLine $dim>unlabel sample</CenterLine>
              <CheckRow>
                <CheckBox>
                  <CheckIcon />
                </CheckBox>
                <Text $ml={15}>Auto next sample</Text>
              </CheckRow>
              <Rule $mt={24} />
              <CenterLine $mt={19}>samples labeled</CenterLine>
              <ProgressRow>
                <ProgressTrack $w={440}>
                  <ProgressFill $full style={{ width: "440px" }} />
                </ProgressTrack>
                <Text $ml={11}>502/502</Text>
              </ProgressRow>
              <CloseRow>
                <PushButton $pl={37}>
                  <CloseIcon />
                  <Text $ml={15}>Close</Text>
                </PushButton>
              </CloseRow>
            </SidePanel>
          </Body>
        </MainWindow>
        <LabelDialog />
      </Desktop>
    </>
  );
}
